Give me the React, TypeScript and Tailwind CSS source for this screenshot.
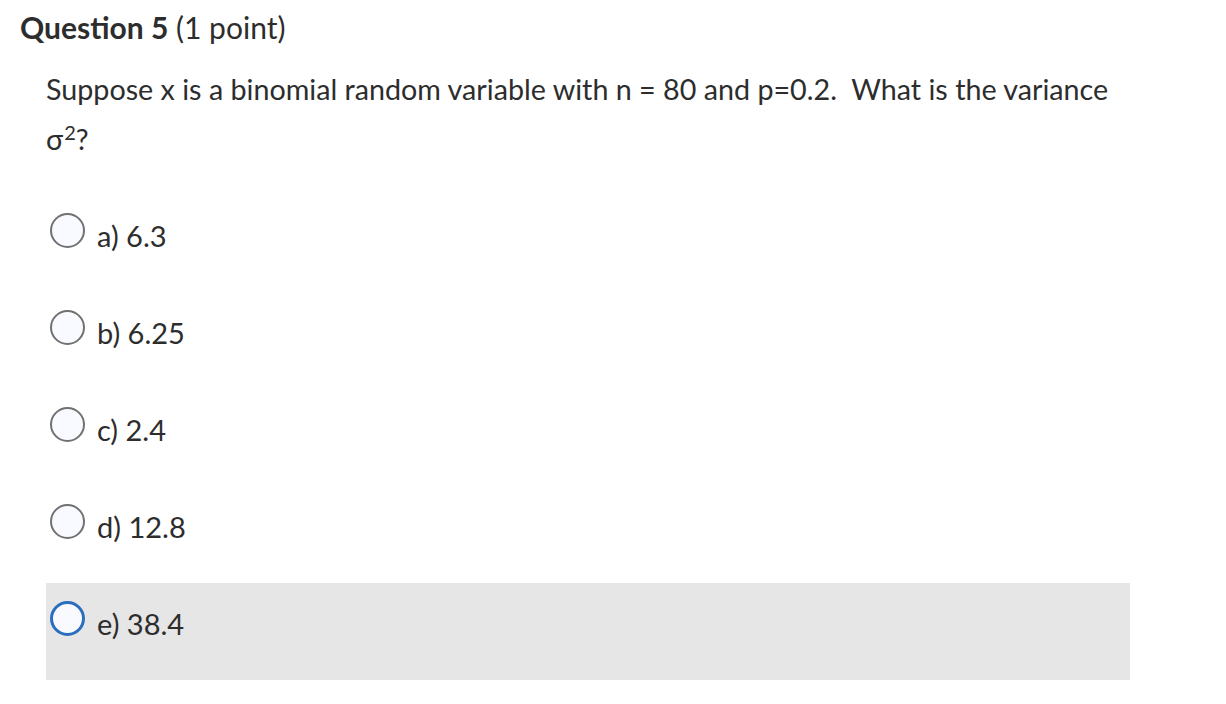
import React from "react";

const options = [
  { label: "a)", value: "6.3" },
  { label: "b)", value: "6.25" },
  { label: "c)", value: "2.4" },
  { label: "d)", value: "12.8" },
  { label: "e)", value: "38.4", active: true },
];

export default function App() {
  return (
    <div className="w-[1226px] h-[704px] bg-white text-[#2d2d2d] font-['Lato',sans-serif] overflow-hidden">
      <div className="pl-[20px] pt-[8px] h-[60px]">
        <h2 className="text-[30px] leading-[38px]">
          <span className="font-bold">Question 5</span>{" "}
          <span className="font-normal">(1 point)</span>
        </h2>
      </div>
      <div className="pl-[46px] pt-[4px] text-[28.7px] leading-[50px] w-[1130px]">
        Suppose x is a binomial random variable with n = 80 and p=0.2.&nbsp; What is the variance σ<sup className="text-[20px] relative top-[-10px] ml-[1px]">2</sup>?
      </div>
      <div className="ml-[46px] mt-[31px] w-[1084px] flex flex-col">
        {options.map((o) => (
          <div
            key={o.label}
            className={
              "h-[97px] flex items-start pt-[18px] pl-[4px] " +
              (o.active ? "bg-[#e6e6e6]" : "")
            }
          >
            <div
              className={
                "w-[35px] h-[35px] rounded-full bg-[#f8faff] shrink-0 " +
                (o.active ? "border-[3px] border-[#2a6ebf]" : "border-2 border-[#717171]")
              }
            />
            <div className="ml-[12px] mt-[5px] text-[29px] leading-[36px]">
              {o.label}&nbsp;{o.value}
            </div>
          </div>
        ))}
      </div>
    </div>
  );
}
